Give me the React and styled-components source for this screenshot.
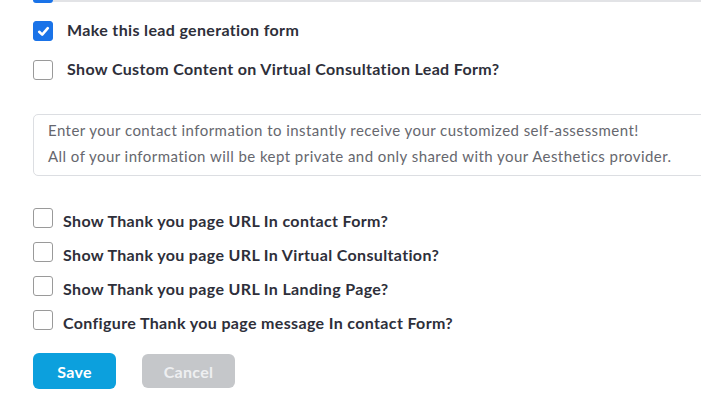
import React from 'react';
import styled, { createGlobalStyle } from 'styled-components';

const GlobalStyle = createGlobalStyle`
    html, body {
        margin: 0;
        padding: 0;
        background: #ffffff;
        overflow: hidden;
    }
    body {
        font-family: "Lato", "Liberation Sans", sans-serif;
        color: #2e2f3a;
    }
`;

const Page = styled.div`
    width: 701px;
    height: 394px;
    position: relative;
    overflow: hidden;
`;

// leftover of the section above, cut by the viewport
const TopEdge = styled.div`
    display: flex;
    align-items: flex-start;
    height: 3px;
    padding-left: 33px;
`;

const EdgeTab = styled.div`
    width: 20px;
    height: 3px;
    background: #1a73e8;
    border-radius: 0 0 3px 3px;
`;

const EdgeLine = styled.div`
    flex: 1;
    height: 2px;
    background: #e2e3e6;
`;

const Form = styled.div`
    display: flex;
    flex-direction: column;
    padding: 18px 0 0 33px;
`;

const Row = styled.label`
    display: flex;
    align-items: center;
    gap: ${props => (props.tight ? '10px' : '14px')};
    height: ${props => props.h || 34}px;
    cursor: pointer;
`;

const Box = styled.span`
    box-sizing: border-box;
    width: 20px;
    height: 20px;
    flex-shrink: 0;
    border-radius: 3px;
    display: flex;
    align-items: center;
    justify-content: center;
    background: ${props => (props.checked ? '#1a73e8' : '#ffffff')};
    border: 1.5px solid ${props => (props.checked ? '#1a73e8' : '#9a9a9a')};
`;

const Label = styled.span`
    font-size: 16px;
    font-weight: 700;
    letter-spacing: 0.35px;
    color: #2e2f3a;
    white-space: nowrap;
    position: relative;
    top: ${props => props.shift || 0}px;
`;

const Message = styled.div`
    box-sizing: border-box;
    margin-top: 34px;
    width: 690px;
    height: 62px;
    border: 1px solid #dcdee2;
    border-radius: 5px;
    padding: 2px 0 0 14px;
    font-size: 15px;
    line-height: 26px;
    letter-spacing: 0.45px;
    color: #66676e;
    font-weight: 400;
    white-space: nowrap;
`;

const Options = styled.div`
    display: flex;
    flex-direction: column;
    margin-top: 25px;
`;

const Actions = styled.div`
    display: flex;
    align-items: center;
    gap: 26px;
    margin-top: 16px;
`;

const Button = styled.button`
    box-sizing: border-box;
    border: none;
    border-radius: 6px;
    height: ${props => (props.primary ? 36 : 34)}px;
    width: ${props => (props.primary ? 83 : 93)}px;
    background: ${props => (props.primary ? '#0ca0dd' : '#c5c7ca')};
    color: ${props => (props.primary ? '#ffffff' : '#eeeff1')};
    font-family: "Lato", "Liberation Sans", sans-serif;
    font-size: 16px;
    font-weight: 700;
    letter-spacing: 0.3px;
    cursor: pointer;
`;

const Spacer = styled.div`
    height: ${props => props.h}px;
`;

const Check = () => (
    <svg width="13" height="13" viewBox="0 0 13 13">
        <path d="M2.2 6.8 L5.2 9.6 L10.8 3.2" fill="none" stroke="#fff" strokeWidth="2.6" strokeLinecap="round" strokeLinejoin="round" />
    </svg>
);

const Option = ({ checked, tight, h, shift, children }) => (
    <Row tight={tight} h={h}>
        <Box checked={checked}>{checked && <Check />}</Box>
        <Label shift={shift}>{children}</Label>
    </Row>
);

const thankYou = [
    'Show Thank you page URL In contact Form?',
    'Show Thank you page URL In Virtual Consultation?',
    'Show Thank you page URL In Landing Page?',
    'Configure Thank you page message In contact Form?',
];

export default function App() {
    return (
        <Page>
            <GlobalStyle />
            <TopEdge>
                <EdgeTab />
                <EdgeLine />
            </TopEdge>
            <Form>
                <Option checked h={20} shift={-2}>Make this lead generation form</Option>
                <Spacer h={19} />
                <Option h={20} shift={-2}>Show Custom Content on Virtual Consultation Lead Form?</Option>
                <Message>
                    Enter your contact information to instantly receive your customized self-assessment!
                    <br />
                    All of your information will be kept private and only shared with your Aesthetics provider.
                </Message>
                <Options>
                    {thankYou.map(t => (
                        <Option key={t} tight shift={2}>{t}</Option>
                    ))}
                </Options>
                <Actions>
                    <Button primary>Save</Button>
                    <Button>Cancel</Button>
                </Actions>
            </Form>
        </Page>
    );
}
